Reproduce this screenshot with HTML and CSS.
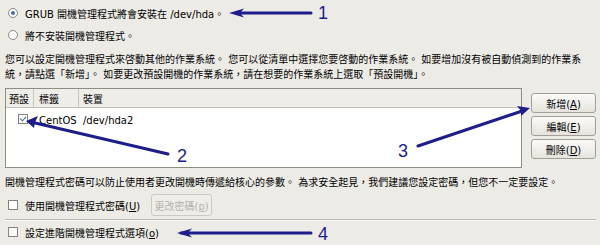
FILE: index.html
```html
<!DOCTYPE html>
<html lang="zh-Hant">
<head>
    <meta charset="UTF-8">
    <title>開機管理程式設定</title>
    <link rel="stylesheet" href="styles.css">
</head>
<body>
  <div class="page">
    <label class="opt">
      <span class="radio on"></span>
      <span>GRUB 開機管理程式將會安裝在 /dev/hda。</span>
    </label>
    <label class="opt">
      <span class="radio"></span>
      <span>將不安裝開機管理程式。</span>
    </label>

    <p class="note">您可以設定開機管理程式來啓動其他的作業系統。 您可以從清單中選擇您要啓動的作業系統。 如要增加沒有被自動偵測到的作業系<br>統，請點選「新增」。 如要更改預設開機的作業系統，請在想要的作業系統上選取「預設開機」。</p>

    <div class="os-area">
      <div class="os-list">
        <div class="os-head">
          <span class="c1">預設</span>
          <span class="c2">標籤</span>
          <span class="c3">裝置</span>
        </div>
        <div class="os-row">
          <span class="c1"><span class="check on"></span></span>
          <span class="c2">CentOS</span>
          <span class="c3">/dev/hda2</span>
        </div>
      </div>
      <div class="os-btns">
        <button class="btn">新增(<u>A</u>)</button>
        <button class="btn">編輯(<u>E</u>)</button>
        <button class="btn">刪除(<u>D</u>)</button>
      </div>
    </div>

    <p class="note pw">開機管理程式密碼可以防止使用者更改開機時傳遞給核心的參數。 為求安全起見，我們建議您設定密碼，但您不一定要設定。</p>

    <div class="opt pw-row">
      <span class="check"></span>
      <span>使用開機管理程式密碼(<u>U</u>)</span>
      <button class="btn off" disabled>更改密碼(<u>p</u>)</button>
    </div>

    <hr class="sep">

    <label class="opt">
      <span class="check"></span>
      <span>設定進階開機管理程式選項(<u>o</u>)</span>
    </label>
  </div>

  <svg class="marks" width="600" height="245" viewBox="0 0 600 245">
    <g stroke="#1d1d8c" stroke-width="3" fill="none" stroke-linecap="round">
      <line x1="236" y1="13" x2="311" y2="13"/>
      <line x1="31" y1="122" x2="168" y2="154"/>
      <line x1="418" y1="146" x2="525" y2="110"/>
      <line x1="181" y1="233" x2="311" y2="233"/>
    </g>
    <g fill="#1d1d8c">
      <polygon points="229,13 244,8.5 240,13 244,17.5"/>
      <polygon points="26,121 38,116 35,122.5 34,128"/>
      <polygon points="530,108 517,106 521,111 521,116"/>
      <polygon points="177,233 192,228.5 188,233 192,237.5"/>
    </g>
    <g class="num" fill="#1d1d8c">
      <text x="318" y="19">1</text>
      <text x="177" y="162">2</text>
      <text x="398" y="157">3</text>
      <text x="318" y="240">4</text>
    </g>
  </svg>
</body>
</html>
```

FILE: styles.css
```css
body {
  margin: 0;
  background: #edebe6;
  font-family: "DejaVu Sans", "Noto Sans CJK TC", sans-serif;
  font-size: 10px;
  color: #000;
}

.page {
  position: relative;
  width: 591px;
  padding: 2px 4px 0 5px;
}

.opt {
  display: flex;
  align-items: center;
  gap: 7px;
  height: 22px;
  padding-left: 3px;
}

.radio {
  box-sizing: border-box;
  width: 10px;
  height: 10px;
  border: 1px solid #8a8782;
  border-radius: 50%;
  background: #fff;
  display: flex;
  align-items: center;
  justify-content: center;
}
.radio.on::after {
  content: "";
  width: 4px;
  height: 4px;
  border-radius: 50%;
  background: #4a6fae;
}

.check {
  box-sizing: border-box;
  display: inline-block;
  width: 10px;
  height: 10px;
  border: 1px solid #85827c;
  background: #fff;
  position: relative;
}
.check.on::after {
  content: "";
  position: absolute;
  left: 2px;
  top: 0;
  width: 3px;
  height: 5px;
  border: solid #3f66a8;
  border-width: 0 1.5px 1.5px 0;
  transform: rotate(40deg);
}

.note {
  margin: 6px 0 0;
  line-height: 15px;
  white-space: nowrap;
}

.os-area {
  display: flex;
  margin-top: 6px;
}

.os-list {
  box-sizing: border-box;
  width: 517px;
  height: 80px;
  border: 1px solid #8f8c86;
  background: #fff;
}

.os-head,
.os-row {
  display: flex;
  align-items: center;
}
.os-head {
  height: 18px;
  background: #efede9;
  border-bottom: 1px solid #c3c0ba;
}
.os-head span {
  height: 100%;
  display: flex;
  align-items: center;
  border-right: 1px solid #c9c6c0;
}
.os-row {
  height: 24px;
}

.c1 {
  box-sizing: border-box;
  width: 28px;
  padding-left: 3px;
}
.os-row .c1 {
  padding-left: 12px;
}
.c2 {
  box-sizing: border-box;
  width: 45px;
  padding-left: 5px;
}
.c3 {
  flex: 1;
  padding-left: 4px;
}
.os-head .c3 {
  border-right: none;
}

.os-btns {
  display: flex;
  flex-direction: column;
  gap: 3px;
  margin-left: 9px;
  padding-top: 5px;
}

.btn {
  box-sizing: border-box;
  width: 65px;
  height: 20px;
  padding: 0;
  border: 1px solid #a29f98;
  border-radius: 3px;
  background: linear-gradient(#fbfaf8, #e6e3dd);
  font: inherit;
  color: #000;
}
.btn.off {
  width: 61px;
  height: 22px;
  margin-left: 4px;
  border-color: #cdcac4;
  background: #efede9;
  color: #b4b1ab;
}

.pw {
  margin-top: 7px;
}
.pw-row {
  margin-top: 4px;
}

.sep {
  margin: 3px 0 0;
  border: 0;
  border-top: 1px solid #bcb9b3;
  border-bottom: 1px solid #fbfaf8;
}

.marks {
  position: absolute;
  top: 0;
  left: 0;
  pointer-events: none;
}
.num text {
  font-family: "Liberation Sans", sans-serif;
  font-size: 18px;
}
```
